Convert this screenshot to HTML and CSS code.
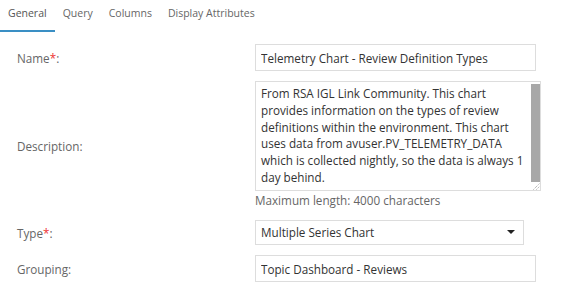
FILE: index.html
```html
<!DOCTYPE html>
<html>
<head>
  <meta charset="utf-8">
  <title>Chart Definition</title>
  <link rel="stylesheet" href="styles.css">
</head>
<body>
  <div class='tabs'>
    <span class='tab active'>General</span>
    <span class='tab'>Query</span>
    <span class='tab'>Columns</span>
    <span class='tab'>Display Attributes</span>
  </div>

  <div class='form'>
    <label class='label'>Name<span class='req'>*</span>:</label>
    <div class='field'>
      <input class='input' type='text' value='Telemetry Chart - Review Definition Types'>
    </div>

    <label class='label'>Description:</label>
    <div class='field'>
      <div class='textarea'>
        <div class='textarea-text'>From RSA IGL Link Community. This chart provides information on the types of review definitions within the environment. This chart uses data from avuser.PV_TELEMETRY_DATA which is collected nightly, so the data is always 1 day behind.</div>
        <div class='scroll'>
          <div class='thumb'></div>
          <div class='grip'>
            <svg width='9' height='8' viewBox='0 0 9 8'>
              <line x1='2.5' y1='7.5' x2='8.5' y2='1.5' stroke='#999' stroke-width='1' stroke-dasharray='1 1'/>
              <line x1='5.5' y1='7.5' x2='8.5' y2='4.5' stroke='#999' stroke-width='1' stroke-dasharray='1 1'/>
            </svg>
          </div>
        </div>
      </div>
      <div class='hint'>Maximum length: 4000 characters</div>
    </div>

    <label class='label'>Type<span class='req'>*</span>:</label>
    <div class='field'>
      <div class='select'>Multiple Series Chart</div>
    </div>

    <label class='label'>Grouping:</label>
    <div class='field'>
      <input class='input' type='text' value='Topic Dashboard - Reviews'>
    </div>
  </div>
</body>
</html>
```

FILE: styles.css
```css
body {
  margin: 0;
  padding: 0;
  background-color: #FFFFFF;
  color: #333333;
  font-family: 'Open Sans', sans-serif;
  font-size: 11.7px;
}
.tabs {
  display: flex;
  height: 32px;
}
.tab {
  padding: 6px 8px 0 8px;
  color: #666666;
  font-size: 10.5px;
  box-sizing: border-box;
}
.tab.active {
  border-bottom: 2px solid #3a8fc4;
  color: #555555;
}
.form {
  display: grid;
  grid-template-columns: 238px 286px;
  row-gap: 10px;
  align-items: center;
  padding: 12px 0 0 17px;
}
.label {
  color: #666666;
}
.req {
  color: #ee3333;
}
.input {
  display: block;
  width: 281px;
  height: 27px;
  box-sizing: border-box;
  border: 1px solid #dddddd;
  padding: 0 5px;
  margin: 0;
  font-family: 'Open Sans', sans-serif;
  font-size: 11.7px;
  color: #333333;
  outline: none;
}
.textarea {
  display: flex;
  width: 286px;
  height: 110px;
  box-sizing: border-box;
  border: 1px solid #dddddd;
  line-height: 16.8px;
}
.textarea-text {
  flex: 1;
  padding: 3px 0 0 5px;
  overflow: hidden;
}
.scroll {
  width: 9px;
  display: flex;
  flex-direction: column;
  padding-top: 2px;
}
.thumb {
  flex: 1;
  background-color: #a8a8a8;
}
.grip {
  height: 8px;
  line-height: 0;
}
.hint {
  color: #666666;
  line-height: 16px;
  margin: 1px 0 2px 0;
}
.select {
  position: relative;
  width: 269px;
  height: 25px;
  box-sizing: border-box;
  border: 1px solid #dddddd;
  padding: 0 5px;
  line-height: 23px;
}
.select::after {
  content: '';
  position: absolute;
  right: 8px;
  top: 9px;
  border-left: 4px solid transparent;
  border-right: 4px solid transparent;
  border-top: 4px solid #222222;
}
```
